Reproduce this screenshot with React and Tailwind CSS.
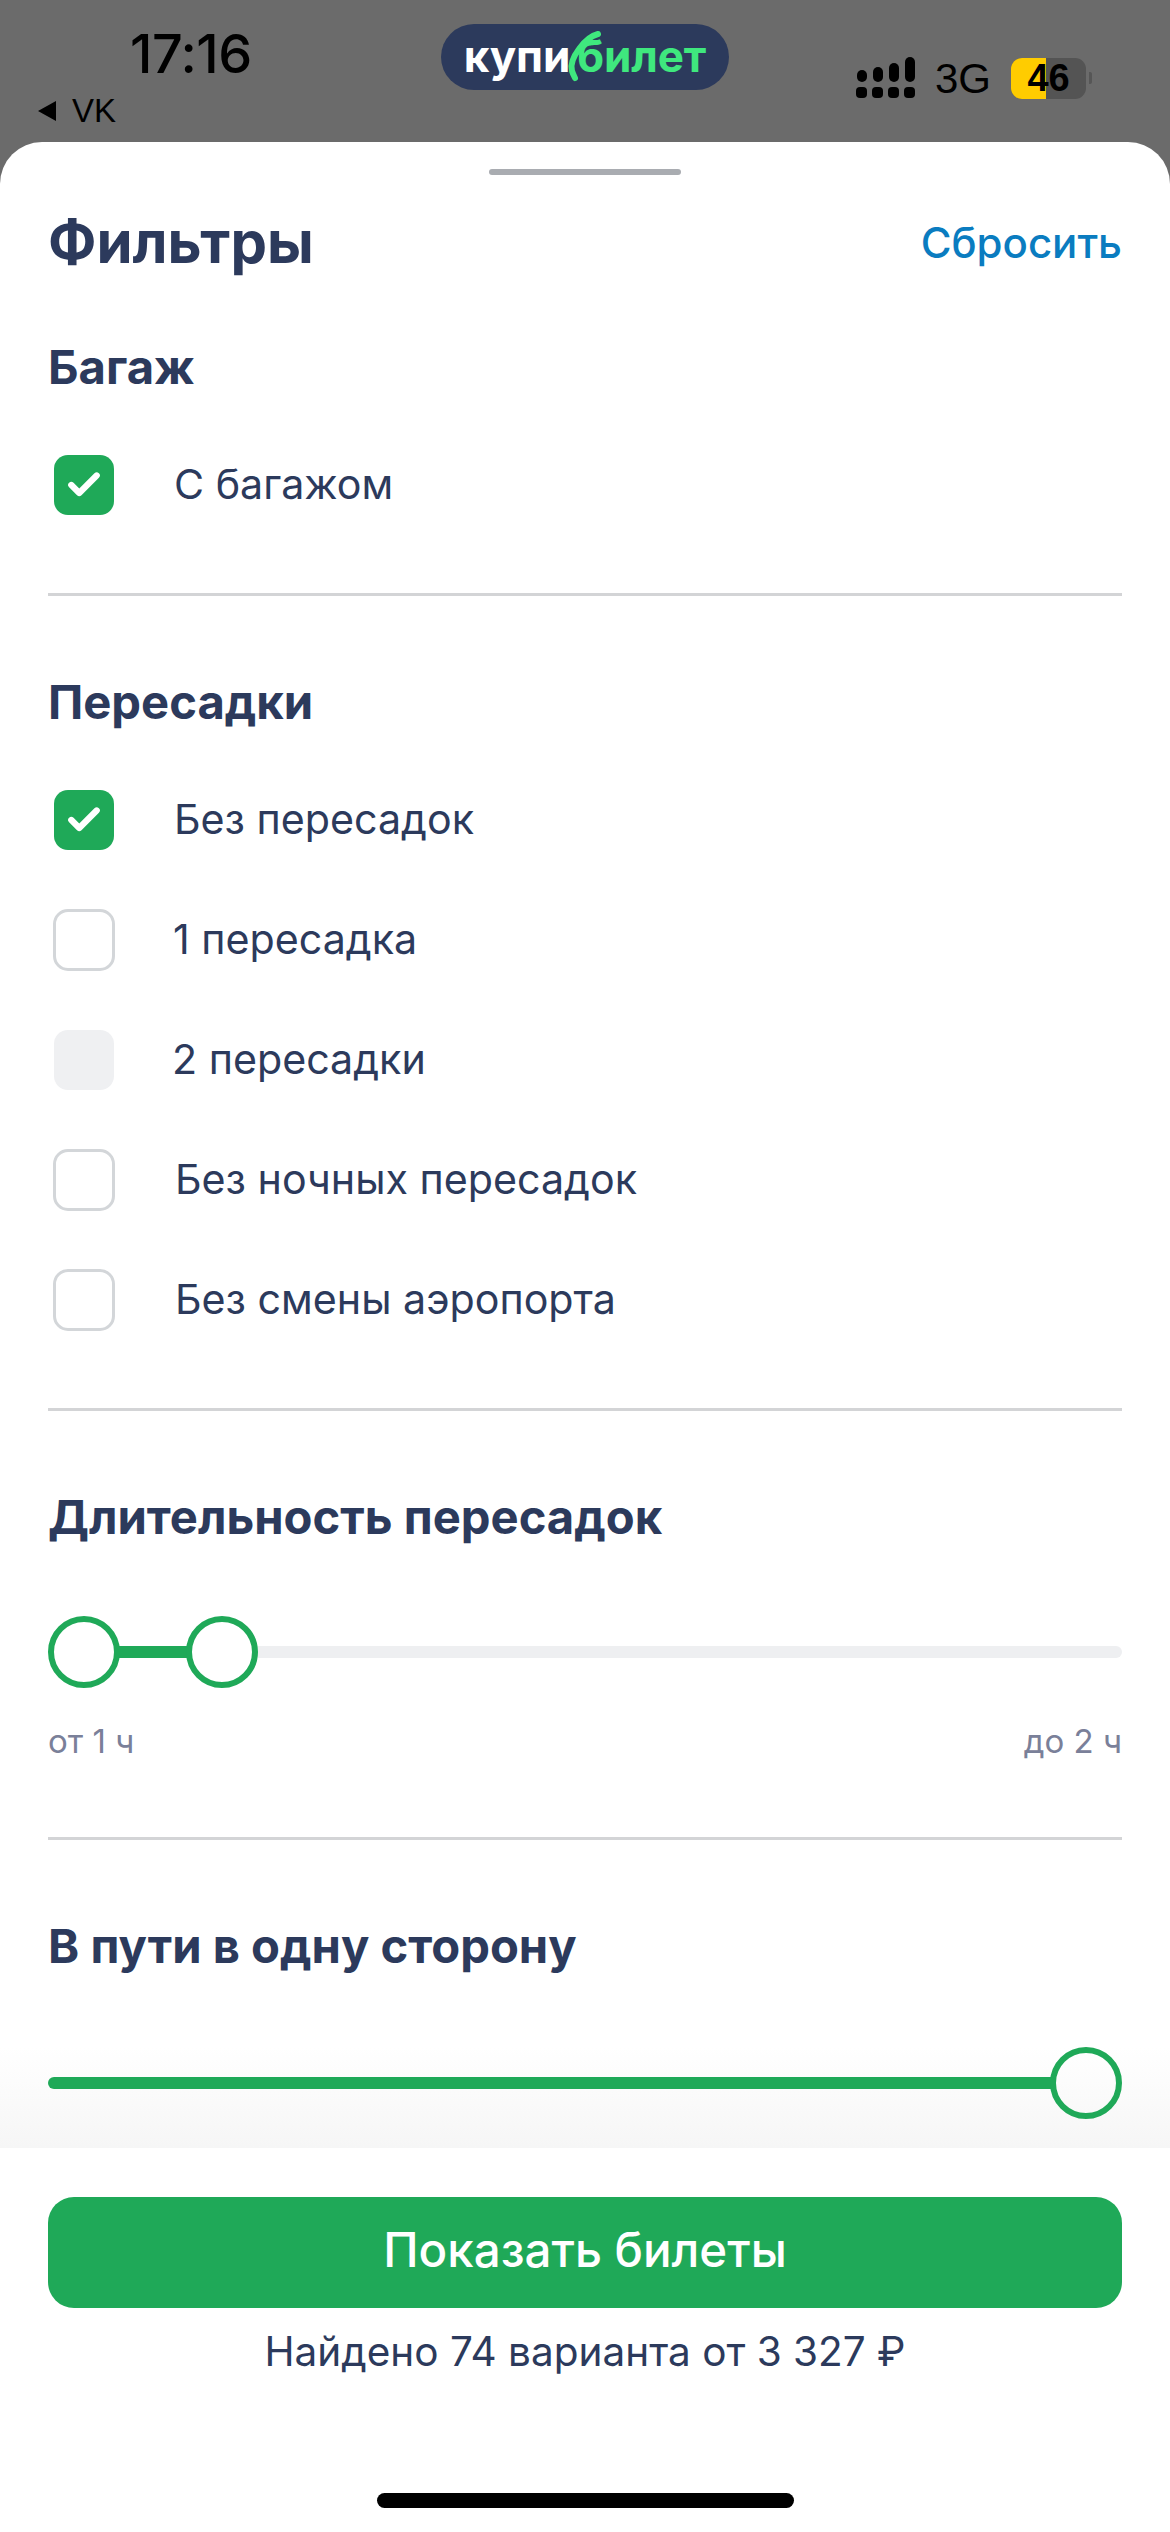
import React from 'react';
import { Check } from 'lucide-react';

const ui = "font-['Inter','Noto_Sans',sans-serif]";

const transferRows = [
    { label: 'Без пересадок', state: 'on' },
    { label: '1 пересадка', state: 'off' },
    { label: '2 пересадки', state: 'disabled' },
    { label: 'Без ночных пересадок', state: 'off' },
    { label: 'Без смены аэропорта', state: 'off' },
];

const SignalIcon = () => (
    <svg width="60" height="42" viewBox="0 0 60 42" className="block">
        <rect x="1" y="13" width="10" height="12" rx="5" fill="#000" />
        <rect x="17" y="10" width="10" height="15" rx="5" fill="#000" />
        <rect x="33" y="6" width="10" height="19" rx="5" fill="#000" />
        <rect x="49" y="0" width="10" height="25" rx="5" fill="#000" />
        <rect x="0" y="30" width="11" height="11" rx="4" fill="#000" />
        <rect x="16" y="30" width="11" height="11" rx="4" fill="#000" />
        <rect x="32" y="30" width="11" height="11" rx="4" fill="#000" />
        <rect x="48" y="30" width="11" height="11" rx="4" fill="#000" />
    </svg>
);

const Logo = () => (
    <div className="relative flex h-[66px] w-[288px] items-center justify-center rounded-[33px] bg-[#2c3a5c] pb-[3px] font-['Inter',sans-serif] text-[44px] font-bold leading-none tracking-[-0.1px]">
        <span className="text-white">купи</span>
        <span className="ml-[7px] text-[#3fe87e]">билет</span>
        {/* хвост буквы б */}
        <svg width="40" height="56" viewBox="0 0 40 56" fill="none" className="absolute left-[125px] top-[6px]">
            <path d="M32 4C24 6 18 12 13 19C7 27 4 34 6 41C7 44 8 46 9 48" stroke="#3fe87e" strokeWidth="6" strokeLinecap="round" />
        </svg>
    </div>
);

const StatusBar = () => (
    <div className="relative flex h-[142px] shrink-0 items-start font-['Liberation_Sans',sans-serif] text-black">
        <div className="w-[441px] shrink-0">
            <div className="ml-[130px] mt-[31px] font-['Inter',sans-serif] text-[54px] font-medium leading-[46px] tracking-[-0.5px]">17:16</div>
            <div className="ml-[38px] mt-[19px] flex items-center gap-[16px] text-[33px] leading-[30px]">
                <span className="h-0 w-0 border-y-[10px] border-r-[18px] border-y-transparent border-r-black" />
                <span>VK</span>
            </div>
        </div>
        <div className="mt-[24px]">
            <Logo />
        </div>
        <div className="ml-[127px] mt-[57px] flex items-center">
            <SignalIcon />
            <span className="ml-[19px] text-[42px] leading-[41px]">3G</span>
            <div className="relative ml-[20px] flex h-[41px] w-[75px] items-center justify-center overflow-hidden rounded-[11px] bg-[#545454]">
                <span className="absolute inset-y-0 left-0 w-[35px] bg-[#ffcc00]" />
                <span className="relative text-[38px] font-bold leading-none">46</span>
            </div>
            <span className="ml-[3px] h-[12px] w-[3px] rounded-r-[2px] bg-[#565656]" />
        </div>
    </div>
);

const Box = ({ state }) => {
    if (state === 'on') {
        return (
            <span className="ml-[6px] flex h-[60px] w-[60px] shrink-0 items-center justify-center rounded-[14px] bg-[#1fa958]">
                <Check size={38} color="#fff" strokeWidth={4} />
            </span>
        );
    }
    if (state === 'disabled') {
        return <span className="ml-[6px] h-[60px] w-[60px] shrink-0 rounded-[14px] bg-[#eff0f2]" />;
    }
    return <span className="ml-[5px] h-[62px] w-[62px] shrink-0 rounded-[15px] border-[3px] border-[#d3d6d9] bg-white" />;
};

const Row = ({ label, state }) => (
    <div className="flex h-[120px] items-center">
        <Box state={state} />
        <span className={`pb-[2px] text-[41.2px] leading-[60px] text-[#2c3a5c] ${state === 'on' || label === 'Без ночных пересадок' || label === 'Без смены аэропорта' ? 'ml-[60px]' : 'ml-[58px]'}`}>
            {label}
        </span>
    </div>
);

const Heading = ({ children }) => (
    <h2 className="h-[60px] text-[47.2px] font-bold leading-[60px] text-[#2c3a5c]">{children}</h2>
);

const Thumb = () => <span className="h-[72px] w-[72px] shrink-0 rounded-full border-[6px] border-[#1fa958] bg-white" />;

const App = () => (
    <div className={`flex h-[2532px] w-full flex-col overflow-hidden bg-[#6b6b6b] ${ui}`}>
        <StatusBar />
        <div className="relative flex min-h-0 flex-1 flex-col overflow-hidden rounded-t-[42px] bg-white">
            <div className="pointer-events-none absolute inset-x-0 bottom-[384px] h-[101px] bg-gradient-to-b from-transparent to-[#f6f6f6]" />

            <div className="mx-auto mt-[27px] h-[6px] w-[192px] shrink-0 rounded-full bg-[#a9acb1]" />

            <div className="relative min-h-0 flex-1 overflow-hidden px-[48px]">
                <div className="mt-[34px] flex h-[72px] items-center justify-between pb-[5px]">
                    <h1 className="text-[58px] font-bold leading-[67px] text-[#2c3a5c]">Фильтры</h1>
                    <button className="text-[42px] font-medium leading-[60px] text-[#0a7cc0]">Сбросить</button>
                </div>

                <div className="mt-[56px]">
                    <Heading>Багаж</Heading>
                </div>
                <div className="mt-[28px]">
                    <Row label="С багажом" state="on" />
                </div>
                <div className="mt-[48px] h-[3px] bg-[#d3d4d6]" />

                <div className="mt-[76px]">
                    <Heading>Пересадки</Heading>
                </div>
                <div className="mt-[28px]">
                    {transferRows.map(row => <Row key={row.label} {...row} />)}
                </div>
                <div className="mt-[48px] h-[3px] bg-[#d3d4d6]" />

                <div className="mt-[76px]">
                    <Heading>Длительность пересадок</Heading>
                </div>
                <div className="mt-[69px] flex items-center">
                    <Thumb />
                    <span className="-mx-[1px] h-[12px] w-[68px] bg-[#1fa958]" />
                    <Thumb />
                    <span className="h-[12px] flex-1 rounded-r-full bg-[#eeeff1]" />
                </div>
                <div className="mt-[29px] flex h-[48px] items-center justify-between text-[33px] leading-[48px] text-[#7a8099]">
                    <span>от 1 ч</span>
                    <span>до 2 ч</span>
                </div>
                <div className="mt-[72px] h-[3px] bg-[#d3d4d6]" />

                <div className="mt-[76px]">
                    <Heading>В пути в одну сторону</Heading>
                </div>
                <div className="mt-[71px] flex items-center">
                    <span className="-mr-[1px] h-[12px] flex-1 rounded-l-full bg-[#1fa958]" />
                    <span className="h-[72px] w-[72px] shrink-0 rounded-full border-[6px] border-[#1fa958] bg-transparent" />
                </div>
            </div>

            <div className="relative flex h-[384px] shrink-0 flex-col items-center bg-white px-[48px] pt-[49px]">
                <button className="h-[111px] w-full rounded-[26px] bg-[#1fa958] pb-[5px] text-[47.5px] font-medium text-white">
                    Показать билеты
                </button>
                <p className="mt-[20px] text-[40.5px] leading-[48px] text-[#2c3a5c]">Найдено 74 варианта от 3 327 ₽</p>
                <div className="mt-[117px] h-[15px] w-[417px] rounded-full bg-black" />
            </div>
        </div>
    </div>
);

export default App;
